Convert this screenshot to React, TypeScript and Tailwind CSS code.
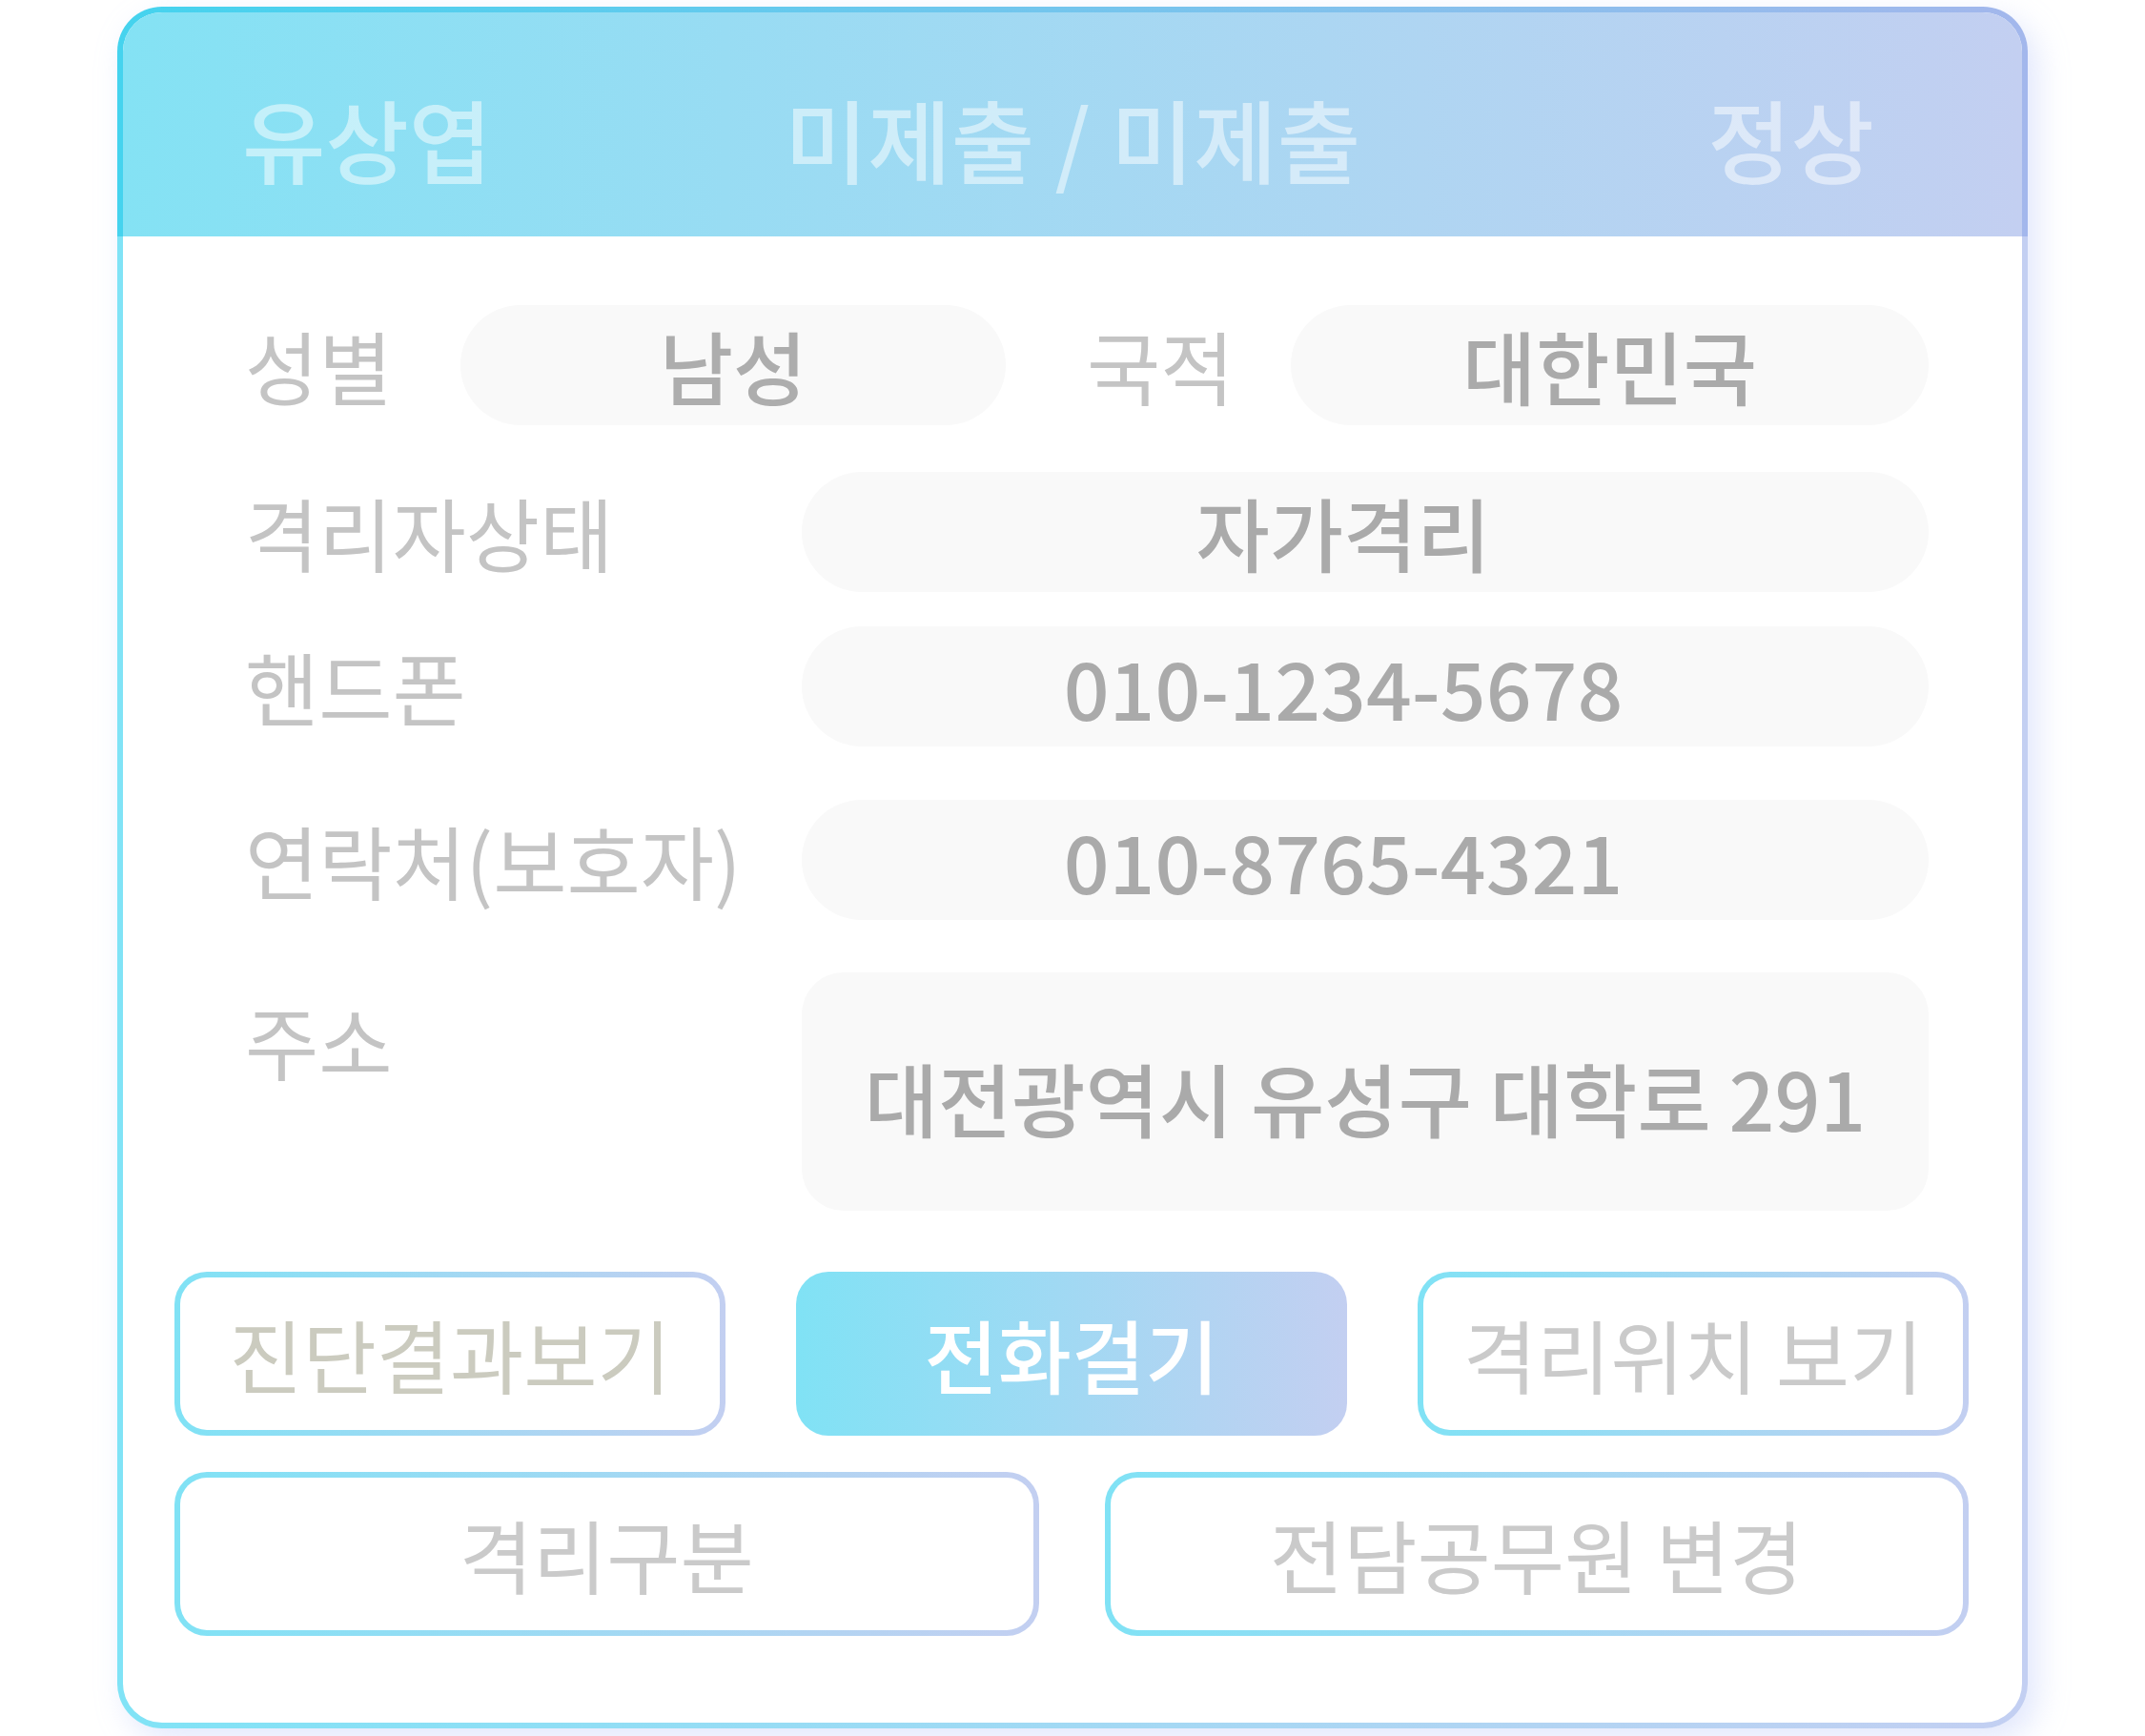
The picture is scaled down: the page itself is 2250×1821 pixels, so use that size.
import React from "react";

function OutlineButton({ label, color = "text-[#cacaca]" }: { label: string; color?: string }) {
  return (
    <div className="h-[172px] rounded-[34px] p-[6px] bg-[linear-gradient(90deg,#80e2f5,#c3cff1)]">
      <div className={`h-full w-full rounded-[28px] bg-white flex items-center justify-center text-[84px] leading-none ${color}`}>
        {label}
      </div>
    </div>
  );
}

function Pill({ children, className = "" }: { children: React.ReactNode; className?: string }) {
  return (
    <div className={`h-[126px] rounded-full bg-[#f9f9f9] flex items-center justify-center text-[84px] font-medium leading-none text-[#aaaaaa] ${className}`}>
      {children}
    </div>
  );
}

export default function App() {
  return (
    <div className="min-h-screen bg-white font-['Noto_Sans_CJK_KR','Noto_Sans_CJK_SC',sans-serif]">
      <div className="pt-[7px] pl-[123px]">
        <div className="w-[2004px] h-[1806px] rounded-[47px] p-[6px] shadow-[10px_12px_32px_rgba(170,185,245,0.35)] [background:linear-gradient(90deg,#45d3ee,#a3b7ec)_top/100%_241px_no-repeat,linear-gradient(90deg,#80e3f6,#c3cff2)]">
          <div className="h-full w-full rounded-[41px] bg-white overflow-hidden flex flex-col">
            {/* Header */}
            <div className="h-[235px] shrink-0 bg-[linear-gradient(90deg,#84e2f4,#c3cff1)] grid grid-cols-[1fr_auto_1fr] items-center pt-[28px] text-[95px] font-medium leading-none text-white/50">
              <div className="pl-[125px]">유상엽</div>
              <div>미제출 / 미제출</div>
              <div className="pr-[155px] text-right">정상</div>
            </div>

            {/* Body */}
            <div className="pl-[128px] pr-[98px] text-[84px] leading-none text-[#c4c4c4]">
              <div className="mt-[72px] flex items-center h-[126px]">
                <div className="w-[226px] shrink-0">성별</div>
                <Pill className="w-[572px] shrink-0 text-[#adadad]">남성</Pill>
                <div className="ml-[85px] w-[214px] shrink-0">국적</div>
                <Pill className="flex-1">대한민국</Pill>
              </div>

              <div className="mt-[49px] flex items-center h-[126px]">
                <div className="w-[584px] shrink-0">격리자상태</div>
                <Pill className="flex-1 pr-[46px]">자가격리</Pill>
              </div>

              <div className="mt-[36px] flex items-center h-[125px]">
                <div className="w-[584px] shrink-0">핸드폰</div>
                <Pill className="flex-1 pr-[46px]">010-1234-5678</Pill>
              </div>

              <div className="mt-[57px] flex items-center h-[126px]">
                <div className="w-[584px] shrink-0">연락처(보호자)</div>
                <Pill className="flex-1 pr-[46px]">010-8765-4321</Pill>
              </div>

              <div className="mt-[55px] flex items-start h-[250px]">
                <div className="w-[584px] shrink-0 pt-[29px]">주소</div>
                <div className="flex-1 h-full rounded-[44px] bg-[#f9f9f9] flex items-center justify-center pt-[12px] text-[84px] font-medium leading-none text-[#aaaaaa]">
                  대전광역시 유성구 대학로 291
                </div>
              </div>
            </div>

            {/* Buttons */}
            <div className="mt-[64px] pl-[54px] pr-[56px]">
              <div className="grid grid-cols-3 gap-x-[74px]">
                <OutlineButton label="진단결과보기" color="text-[#cbcbbf]" />
                <div className="h-[172px] rounded-[34px] bg-[linear-gradient(90deg,#80e2f5,#c3cff1)] flex items-center justify-center text-[84px] font-medium leading-none text-white">
                  전화걸기
                </div>
                <OutlineButton label="격리위치 보기" />
              </div>
              <div className="mt-[38px] grid grid-cols-2 gap-x-[69px]">
                <OutlineButton label="격리구분" />
                <OutlineButton label="전담공무원 변경" />
              </div>
            </div>
          </div>
        </div>
      </div>
    </div>
  );
}
